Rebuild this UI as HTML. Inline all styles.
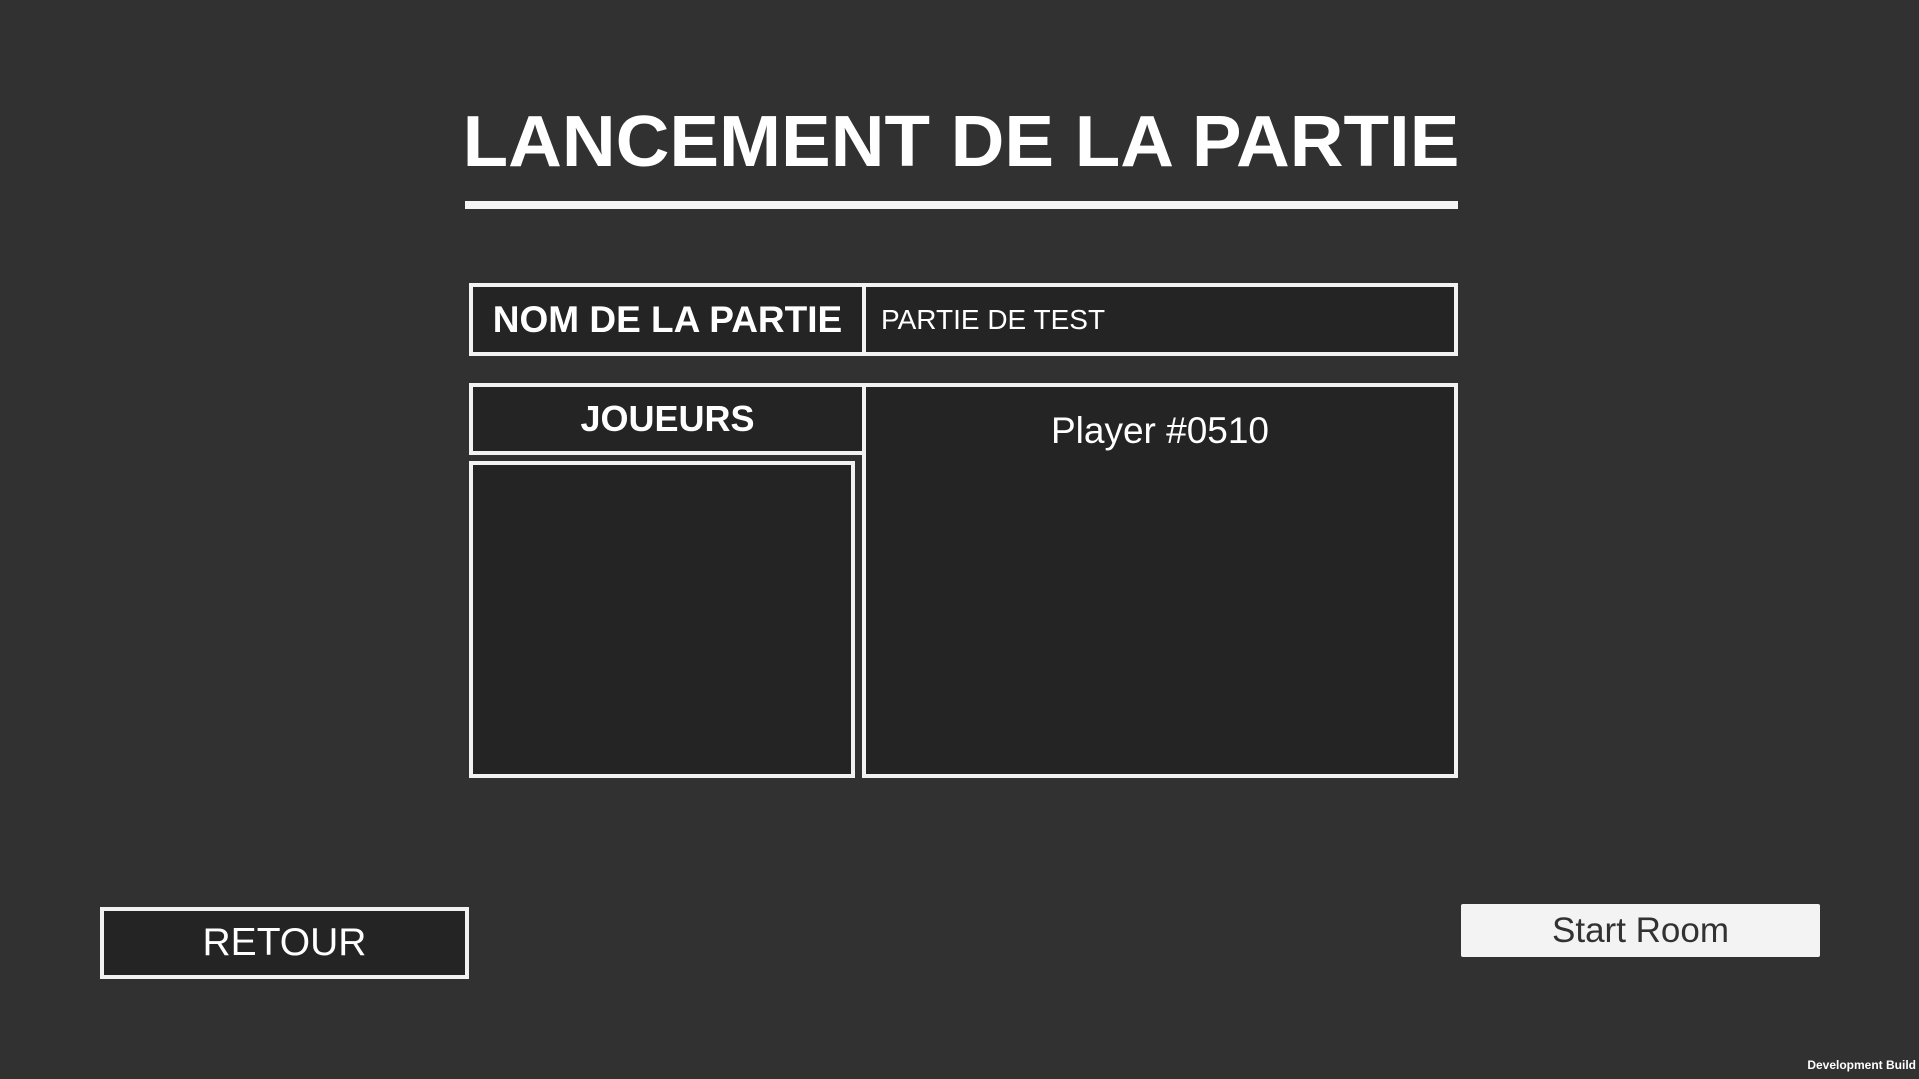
<!DOCTYPE html>
<html><head><meta charset="utf-8"><style>
body{margin:0;width:1919px;height:1079px;background:#313131;overflow:hidden;position:relative;font-family:"Liberation Sans",sans-serif;color:#fff}
.a{position:absolute;box-sizing:border-box}
.b{border:4px solid #f2f2f2;background:#242424}
.t{display:flex;align-items:center;white-space:nowrap}
</style></head><body>
<div class="a t" style="left:463px;top:100px;width:996px;height:84px;justify-content:center;font-size:72px;font-weight:bold;"><span style="transform:scaleX(1.034);display:inline-block">LANCEMENT DE LA PARTIE</span></div>
<div class="a" style="left:465px;top:201px;width:993px;height:8px;background:#f5f5f5"></div>

<div class="a b t" style="left:469px;top:283px;width:397px;height:73px;justify-content:center;font-size:37px;font-weight:bold;">NOM DE LA PARTIE</div>
<div class="a b t" style="left:862px;top:283px;width:596px;height:73px;padding-left:15px;font-size:28px;">PARTIE DE TEST</div>

<div class="a b t" style="left:469px;top:383px;width:397px;height:72px;justify-content:center;font-size:36px;font-weight:bold;">JOUEURS</div>
<div class="a b" style="left:469px;top:461px;width:386px;height:317px"></div>
<div class="a b" style="left:862px;top:383px;width:596px;height:395px"></div>
<div class="a t" style="left:862px;top:408px;width:596px;height:45px;justify-content:center;font-size:37px;">Player #0510</div>

<div class="a b t" style="left:100px;top:907px;width:369px;height:72px;justify-content:center;font-size:39px;">RETOUR</div>
<div class="a t" style="left:1461px;top:904px;width:359px;height:53px;justify-content:center;background:#f3f3f3;border-radius:2px;color:#323232;font-size:35px;">Start Room</div>

<div class="a" style="right:3px;top:1058px;font-size:12px;font-weight:bold;">Development Build</div>
</body></html>
